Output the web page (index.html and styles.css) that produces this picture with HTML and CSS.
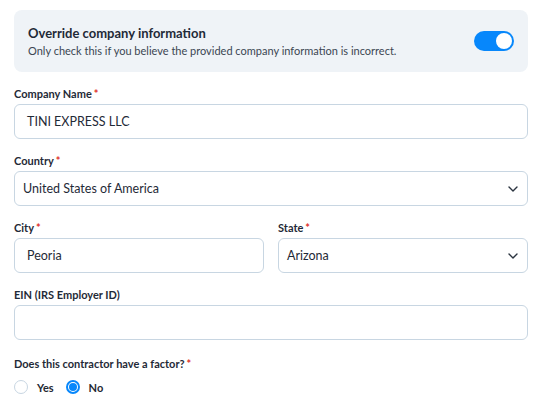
FILE: index.html
```html
<!DOCTYPE html>
<html lang="en">
<head>
<meta charset="utf-8">
<title>Company information</title>
<link rel="stylesheet" href="styles.css">
</head>
<body>
<div class="form">
  <div class="banner">
    <div class="banner-text">
      <div class="banner-title">Override company information</div>
      <div class="banner-sub">Only check this if you believe the provided company information is incorrect.</div>
    </div>
    <div class="toggle"><span class="knob"></span></div>
  </div>

  <div class="field">
    <label class="label">Company Name<span class="req">*</span></label>
    <div class="input"><span class="value pad-lg">TINI EXPRESS LLC</span></div>
  </div>

  <div class="field">
    <label class="label">Country<span class="req">*</span></label>
    <div class="input select"><span class="value">United States of America</span>
      <svg class="chev" width="10" height="6" viewBox="0 0 10 6"><path d="M1 1 5 5 9 1" fill="none" stroke="#2b3440" stroke-width="1.4" stroke-linecap="round" stroke-linejoin="round"/></svg>
    </div>
  </div>

  <div class="row">
    <div class="field">
      <label class="label">City<span class="req">*</span></label>
      <div class="input"><span class="value pad-lg">Peoria</span></div>
    </div>
    <div class="field">
      <label class="label">State<span class="req">*</span></label>
      <div class="input select"><span class="value">Arizona</span>
        <svg class="chev" width="10" height="6" viewBox="0 0 10 6"><path d="M1 1 5 5 9 1" fill="none" stroke="#2b3440" stroke-width="1.4" stroke-linecap="round" stroke-linejoin="round"/></svg>
      </div>
    </div>
  </div>

  <div class="field">
    <label class="label">EIN (IRS Employer ID)</label>
    <div class="input"></div>
  </div>

  <div class="field question">
    <label class="label">Does this contractor have a factor?<span class="req">*</span></label>
    <div class="radios">
      <span class="radio-item"><span class="radio"></span><span class="radio-label">Yes</span></span>
      <span class="radio-item"><span class="radio checked"></span><span class="radio-label">No</span></span>
    </div>
  </div>
</div>
</body>
</html>
```

FILE: styles.css
```css
* { box-sizing: border-box; }
html, body { margin: 0; padding: 0; background: #ffffff; }
body {
  font-family: Lato, "Open Sans", sans-serif;
  color: #1f2933;
}
.form {
  padding: 10px 16px 0 14px;
  display: flex;
  flex-direction: column;
  gap: 14px;
}
.banner {
  background: #eff3f7;
  border-radius: 8px;
  height: 62px;
  padding: 0 14px;
  display: flex;
  align-items: center;
  justify-content: space-between;
}
.banner-text { display: flex; flex-direction: column; gap: 2px; }
.banner-title { font-size: 13px; font-weight: 700; line-height: 18px; color: #1f2a37; }
.banner-sub { font-size: 11px; line-height: 14px; color: #3b4652; }
.toggle {
  width: 40px;
  height: 20px;
  border-radius: 10px;
  background: #0787fb;
  display: flex;
  align-items: center;
  justify-content: flex-end;
  padding: 0 2px;
}
.knob { width: 16px; height: 16px; border-radius: 50%; background: #ffffff; }
.field { display: flex; flex-direction: column; gap: 2px; min-width: 0; }
.label { font-size: 11px; font-weight: 700; line-height: 16px; color: #1f2a37; }
.req { color: #e0322b; margin-left: 2px; }
.input {
  height: 35px;
  border: 1px solid #c8d6e2;
  border-radius: 6px;
  display: flex;
  align-items: center;
  padding: 0 9px 0 8px;
  justify-content: space-between;
  font-size: 12.5px;
  color: #1f2a37;
}
.value.pad-lg { padding-left: 4px; }
.chev { flex: none; }
.row { display: grid; grid-template-columns: 1fr 1fr; gap: 14px; }
.question { margin-top: 2px; }
.radios { display: flex; gap: 12px; align-items: center; height: 24px; margin-top: 1px; }
.radio-item { display: flex; align-items: center; gap: 9px; font-size: 11px; font-weight: 700; }
.radio {
  width: 14px; height: 14px; border-radius: 50%;
  border: 1px solid #c8d6e2; background: #fff;
  display: flex; align-items: center; justify-content: center;
}
.radio.checked { border: 2px solid #0787fb; }
.radio.checked::after { content: ""; width: 8px; height: 8px; border-radius: 50%; background: #0787fb; }
```
